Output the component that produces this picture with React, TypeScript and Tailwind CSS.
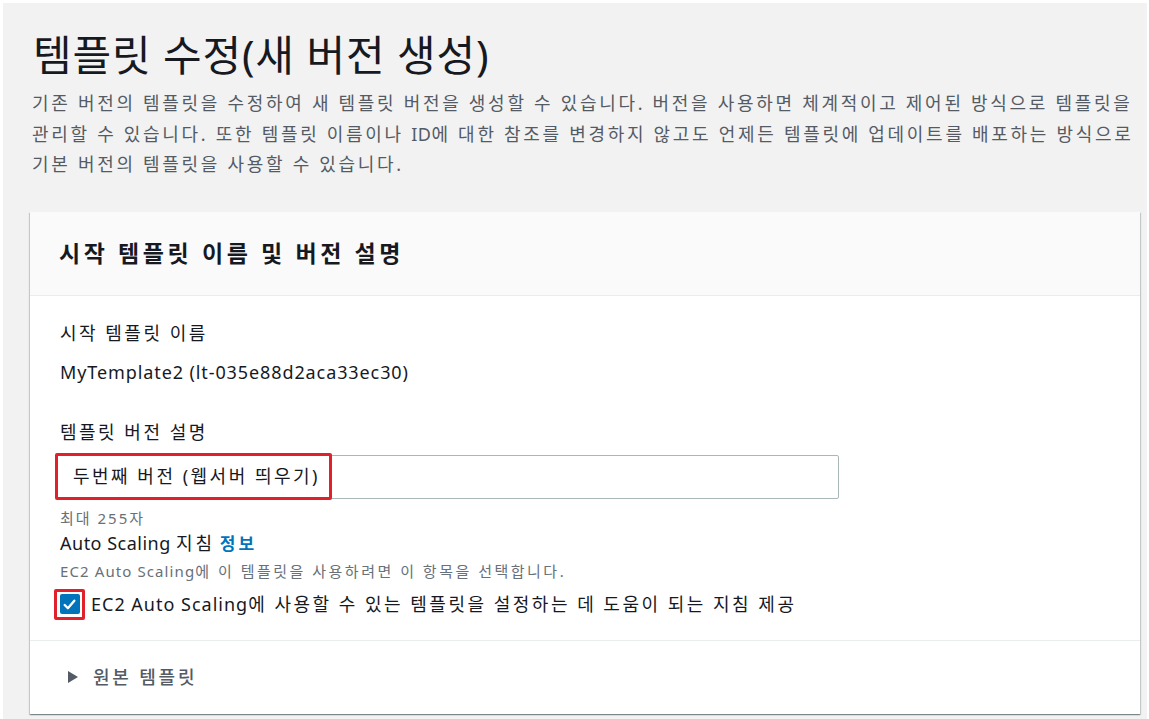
import React from "react";

const font = { fontFamily: '"Noto Sans", "Noto Sans CJK KR", sans-serif' };

export default function App() {
  return (
    <div className="w-[1149px] h-[719px] bg-white pt-[3px] pl-[3px] pr-[2px] overflow-hidden" style={font}>
      <div className="h-full bg-[#f2f2f2] pl-[27px] pr-[7px] pt-[26px]">
        <h1 className="text-[42px] leading-[52px] text-[#16191f] font-normal pl-[3px] tracking-[0.8px]">
          템플릿 수정(새 버전 생성)
        </h1>
        <p className="mt-[7px] pl-[2px] text-[18px] leading-[30.5px] tracking-[2.7px] text-[#545b64] whitespace-nowrap">
          기존 버전의 템플릿을 수정하여 새 템플릿 버전을 생성할 수 있습니다. 버전을 사용하면 체계적이고 제어된 방식으로 템플릿을
          <br />
          관리할 수 있습니다. 또한 템플릿 이름이나 <span className="tracking-[0.5px]">ID</span>에 대한 참조를 변경하지 않고도 언제든 템플릿에 업데이트를 배포하는 방식으로
          <br />
          기본 버전의 템플릿을 사용할 수 있습니다.
        </p>
        <div className="mt-[32px] bg-white shadow-[0_1px_1px_0_rgba(0,28,36,0.3),1px_1px_1px_0_rgba(0,28,36,0.15),-1px_1px_1px_0_rgba(0,28,36,0.15)]">
          <div className="h-[84px] bg-[#fafafa] border-b border-[#eaeded] flex items-center px-[29px]">
            <h2 className="text-[23px] leading-[30px] font-bold tracking-[3.6px] text-[#16191f]">시작 템플릿 이름 및 버전 설명</h2>
          </div>
          <div className="px-[30px] pt-[24px] h-[344px]">
            <div className="text-[18px] leading-[26px] tracking-[2.5px] text-[#16191f]">시작 템플릿 이름</div>
            <div className="mt-[13px] text-[18px] leading-[26px] tracking-[0.9px] text-[#16191f]">MyTemplate2 (lt-035e88d2aca33ec30)</div>
            <div className="mt-[34px] text-[18px] leading-[26px] tracking-[2.5px] text-[#16191f]">템플릿 버전 설명</div>
            <div className="mt-[10px] relative w-[783px] h-[44px] border border-[#aab7b8] rounded-[2px] bg-white ml-[-4px] flex items-center">
              <span className="pl-[16px] text-[18px] tracking-[2.5px] text-[#16191f]">두번째 버전 (웹서버 띄우기)</span>
              <div className="absolute left-[-2px] top-[-3px] w-[277px] h-[47px] border-[3px] border-[#e0202a] rounded-[2px]" />
            </div>
            <div className="mt-[9px] text-[15px] leading-[20px] tracking-[2px] text-[#687078]">최대 255자</div>
            <div className="mt-[2px] text-[18px] leading-[26px] text-[#16191f]">
              <span className="tracking-[0.5px]">Auto Scaling </span>
              <span className="tracking-[3px]">지침</span>{" "}
              <span className="text-[#0073bb] font-bold text-[17px] tracking-[3px]">정보</span>
            </div>
            <div className="mt-[3px] text-[15px] leading-[22px] text-[#687078]">
              <span className="tracking-[1.1px]">EC2 Auto Scaling</span>
              <span className="tracking-[2.5px]">에 이 템플릿을 사용하려면 이 항목을 선택합니다.</span>
            </div>
            <div className="mt-[7px] flex items-center ml-[-6px]">
              <div className="w-[31px] h-[31px] border-[3px] border-[#e0202a] rounded-[2px] flex items-center justify-center">
                <div className="w-[20px] h-[20px] bg-[#0073bb] rounded-[2px] flex items-center justify-center">
                  <svg width="15" height="15" viewBox="0 0 14 14" fill="none">
                    <path d="M2.5 7.5 L5.5 10.5 L11.5 3.5" stroke="white" strokeWidth="2.2" strokeLinecap="round" strokeLinejoin="round" />
                  </svg>
                </div>
              </div>
              <span className="ml-[6px] text-[18px] text-[#16191f] whitespace-nowrap">
                <span className="tracking-[1px]">EC2 Auto Scaling</span>
                <span className="tracking-[2.5px]">에 사용할 수 있는 템플릿을 설정하는 데 도움이 되는 지침 제공</span>
              </span>
            </div>
          </div>
          <div className="h-[74px] border-t border-[#eaeded] flex items-center pl-[37px]">
            <svg width="12" height="14" viewBox="0 0 12 14">
              <path d="M1 1 L11 7 L1 13 Z" fill="#545b64" />
            </svg>
            <span className="ml-[14px] text-[18px] font-medium tracking-[2.8px] text-[#545b64]">원본 템플릿</span>
          </div>
        </div>
      </div>
    </div>
  );
}
